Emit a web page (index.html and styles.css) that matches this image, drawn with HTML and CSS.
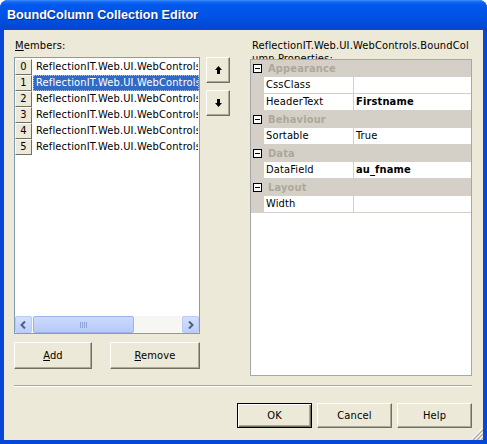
FILE: index.html
```html
<!DOCTYPE html>
<html>
<head>
<meta charset="utf-8">
<link rel="stylesheet" href="styles.css">
</head>
<body>
<div class="window">
  <div class="titlebar"><span class="title">BoundColumn Collection Editor</span></div>
  <div class="client">
    <div class="main">
      <div class="left">
        <div class="label"><u>M</u>embers:</div>
        <div class="listbox">
          <div class="items">
            <div class="item"><span class="idx">0</span><span class="txt">ReflectionIT.Web.UI.WebControls.BoundColumn</span></div>
            <div class="item sel"><span class="idx">1</span><span class="txt">ReflectionIT.Web.UI.WebControls.BoundColumn</span></div>
            <div class="item"><span class="idx">2</span><span class="txt">ReflectionIT.Web.UI.WebControls.BoundColumn</span></div>
            <div class="item"><span class="idx">3</span><span class="txt">ReflectionIT.Web.UI.WebControls.BoundColumn</span></div>
            <div class="item"><span class="idx">4</span><span class="txt">ReflectionIT.Web.UI.WebControls.BoundColumn</span></div>
            <div class="item"><span class="idx">5</span><span class="txt">ReflectionIT.Web.UI.WebControls.BoundColumn</span></div>
          </div>
          <div class="hscroll">
            <div class="sbtn"><svg width="7" height="8" viewBox="0 0 7 8"><path d="M5 0.5 L1.5 4 L5 7.5" fill="none" stroke="#4d6185" stroke-width="2"/></svg></div>
            <div class="thumb"><svg width="8" height="6" viewBox="0 0 8 6"><path d="M0.5 0v6M2.5 0v6M4.5 0v6M6.5 0v6" stroke="#8ca4d9" stroke-width="1"/></svg></div>
            <div class="track"></div>
            <div class="sbtn"><svg width="7" height="8" viewBox="0 0 7 8"><path d="M2 0.5 L5.5 4 L2 7.5" fill="none" stroke="#4d6185" stroke-width="2"/></svg></div>
          </div>
        </div>
        <div class="btnrow">
          <div class="btn add"><span><u>A</u>dd</span></div>
          <div class="btn remove"><span><u>R</u>emove</span></div>
        </div>
      </div>
      <div class="arrows">
        <div class="btn arrow"><svg width="7" height="8" viewBox="0 0 7 8"><path d="M3.5 0 L7 4 L5 4 L5 8 L2 8 L2 4 L0 4 Z" fill="#000"/></svg></div>
        <div class="btn arrow"><svg width="7" height="8" viewBox="0 0 7 8"><path d="M3.5 8 L7 4 L5 4 L5 0 L2 0 L2 4 L0 4 Z" fill="#000"/></svg></div>
      </div>
      <div class="right">
        <div class="plabel">ReflectionIT.Web.UI.WebControls.BoundColumn Properties:</div>
        <div class="grid">
          <div class="cat"><span class="box"></span><span class="ctext">Appearance</span></div>
          <div class="prop"><span class="pm"></span><span class="pname">CssClass</span><span class="pval"></span></div>
          <div class="prop"><span class="pm"></span><span class="pname">HeaderText</span><span class="pval b">Firstname</span></div>
          <div class="cat"><span class="box"></span><span class="ctext">Behaviour</span></div>
          <div class="prop"><span class="pm"></span><span class="pname">Sortable</span><span class="pval">True</span></div>
          <div class="cat"><span class="box"></span><span class="ctext">Data</span></div>
          <div class="prop"><span class="pm"></span><span class="pname">DataField</span><span class="pval b">au_fname</span></div>
          <div class="cat"><span class="box"></span><span class="ctext">Layout</span></div>
          <div class="prop"><span class="pm"></span><span class="pname">Width</span><span class="pval"></span></div>
        </div>
      </div>
    </div>
    <div class="sep"></div>
    <div class="footer">
      <div class="btn fbtn def"><span>OK</span></div>
      <div class="btn fbtn"><span>Cancel</span></div>
      <div class="btn fbtn"><span>Help</span></div>
    </div>
    <svg class="grip" width="12" height="12" viewBox="0 0 12 12">
      <path d="M11 1L1 11M11 5L5 11M11 9L9 11" stroke="#fff" stroke-width="1"/>
      <path d="M12 2L2 12M12 6L6 12M12 10L10 12" stroke="#aca899" stroke-width="1.2"/>
    </svg>
  </div>
</div>
</body>
</html>
```

FILE: styles.css
```css
* { box-sizing: border-box; }
html, body { margin: 0; padding: 0; background: #fff; }
body {
  font-family: "DejaVu Sans Condensed", "DejaVu Sans", sans-serif;
  font-stretch: condensed;
  font-size: 11px;
  line-height: 13px;
  letter-spacing: 0.15px;
  color: #000;
}
.window {
  width: 487px;
  height: 444px;
  background: #0846d8;
  border-radius: 8px 8px 0 0;
  display: flex;
  flex-direction: column;
  overflow: hidden;
}
.titlebar {
  height: 30px;
  flex: none;
  background: linear-gradient(to bottom, #3d8fff 0, #1467f0 2px, #0058ee 5px, #0055e8 12px, #0050e0 20px, #0049d6 26px, #0a44cc 30px);
  display: flex;
  align-items: center;
  padding-left: 7px;
  padding-top: 1px;
}
.title {
  color: #fff;
  font-family: "Liberation Sans", Arial, sans-serif;
  font-stretch: normal;
  font-weight: bold;
  font-size: 12.6px;
  letter-spacing: 0;
  text-shadow: 1px 1px 0 #0b2a8c;
}
.client {
  flex: 1;
  margin: 0 4px 4px;
  background: #ece9d8;
  position: relative;
  padding: 9px 11px 0 10px;
}
.main {
  display: flex;
  height: 337px;
}
.left {
  width: 186px;
  display: flex;
  flex-direction: column;
}
.label {
  height: 13px;
  margin-bottom: 5px;
  padding-left: 1px;
}
.listbox {
  height: 277px;
  border: 1px solid #7f9db9;
  background: #fff;
  display: flex;
  flex-direction: column;
}
.items { flex: 1; overflow: hidden; padding-top: 1px; }
.item {
  height: 16px;
  display: flex;
  white-space: nowrap;
}
.idx {
  width: 17px;
  flex: none;
  background: #ece9d8;
  border: 1px solid;
  border-color: #fff #716f64 #716f64 #fff;
  text-align: center;
  line-height: 14px;
}
.txt {
  flex: 1;
  overflow: hidden;
  padding-left: 2px;
  line-height: 14px;
  margin-left: 1px;
  border: 1px solid transparent;
}
.sel .txt {
  background: #316ac5;
  color: #fff;
  border: 1px dotted #a9c1e8;
}
.hscroll {
  height: 17px;
  flex: none;
  display: flex;
  background: #f7f6f2;
}
.sbtn {
  width: 17px;
  height: 17px;
  border: 1px solid #b9cbf3;
  border-radius: 2px;
  background: linear-gradient(to bottom, #d4e0fb, #bccefa);
  display: flex;
  align-items: center;
  justify-content: center;
  flex: none;
}
.thumb {
  width: 101px;
  height: 17px;
  margin-left: 1px;
  border: 1px solid #9db4ea;
  border-radius: 2px;
  background: linear-gradient(to bottom, #cbdafc, #b6c9f8);
  display: flex;
  align-items: center;
  justify-content: center;
}
.track { flex: 1; }
.btnrow {
  display: flex;
  justify-content: space-between;
  margin-top: 8px;
}
.btn {
  background: #ece9d8;
  border: 1px solid;
  border-color: #fff #716f64 #716f64 #fff;
  box-shadow: inset -1px -1px 0 #aca899;
  display: flex;
  align-items: center;
  justify-content: center;
}
.add { width: 78px; height: 27px; }
.remove { width: 90px; height: 27px; }
.arrows {
  margin-left: 6px;
  margin-top: 18px;
  display: flex;
  flex-direction: column;
  gap: 7px;
}
.arrow { width: 24px; height: 26px; }
.right {
  margin-left: auto;
  width: 222px;
  display: flex;
  flex-direction: column;
}
.plabel {
  height: 20px;
  overflow: hidden;
  padding-left: 2px;
  word-break: break-all;
}
.grid {
  height: 317px;
  border: 1px solid #a7a6aa;
  background: #fff;
}
.cat {
  height: 17px;
  background: #d4d0c8;
  display: flex;
  align-items: center;
}
.box {
  width: 9px;
  height: 9px;
  border: 1px solid #000;
  margin-left: 2px;
  background: linear-gradient(#000, #000) center / 5px 1px no-repeat, #fff;
}
.ctext {
  margin-left: 6px;
  font-weight: bold;
  color: #aca899;
}
.prop {
  height: 17px;
  display: flex;
}
.pm { width: 13px; background: #d4d0c8; flex: none; }
.pname {
  width: 90px;
  flex: none;
  border-right: 1px solid #d4d0c8;
  border-bottom: 1px solid #d4d0c8;
  padding-left: 2px;
  line-height: 16px;
}
.pval {
  flex: 1;
  border-bottom: 1px solid #d4d0c8;
  padding-left: 2px;
  line-height: 16px;
}
.b { font-weight: bold; }
.sep {
  margin-top: 9px;
  height: 2px;
  border-top: 1px solid #aca899;
  border-bottom: 1px solid #fff;
}
.footer {
  display: flex;
  justify-content: flex-end;
  gap: 5px;
  margin-top: 16px;
}
.fbtn { width: 75px; height: 25px; }
.def {
  border-color: #000;
  box-shadow: inset 1px 1px 0 #fff, inset -1px -1px 0 #716f64, inset -2px -2px 0 #aca899;
}
.grip {
  position: absolute;
  right: 0;
  bottom: 0;
}
```
